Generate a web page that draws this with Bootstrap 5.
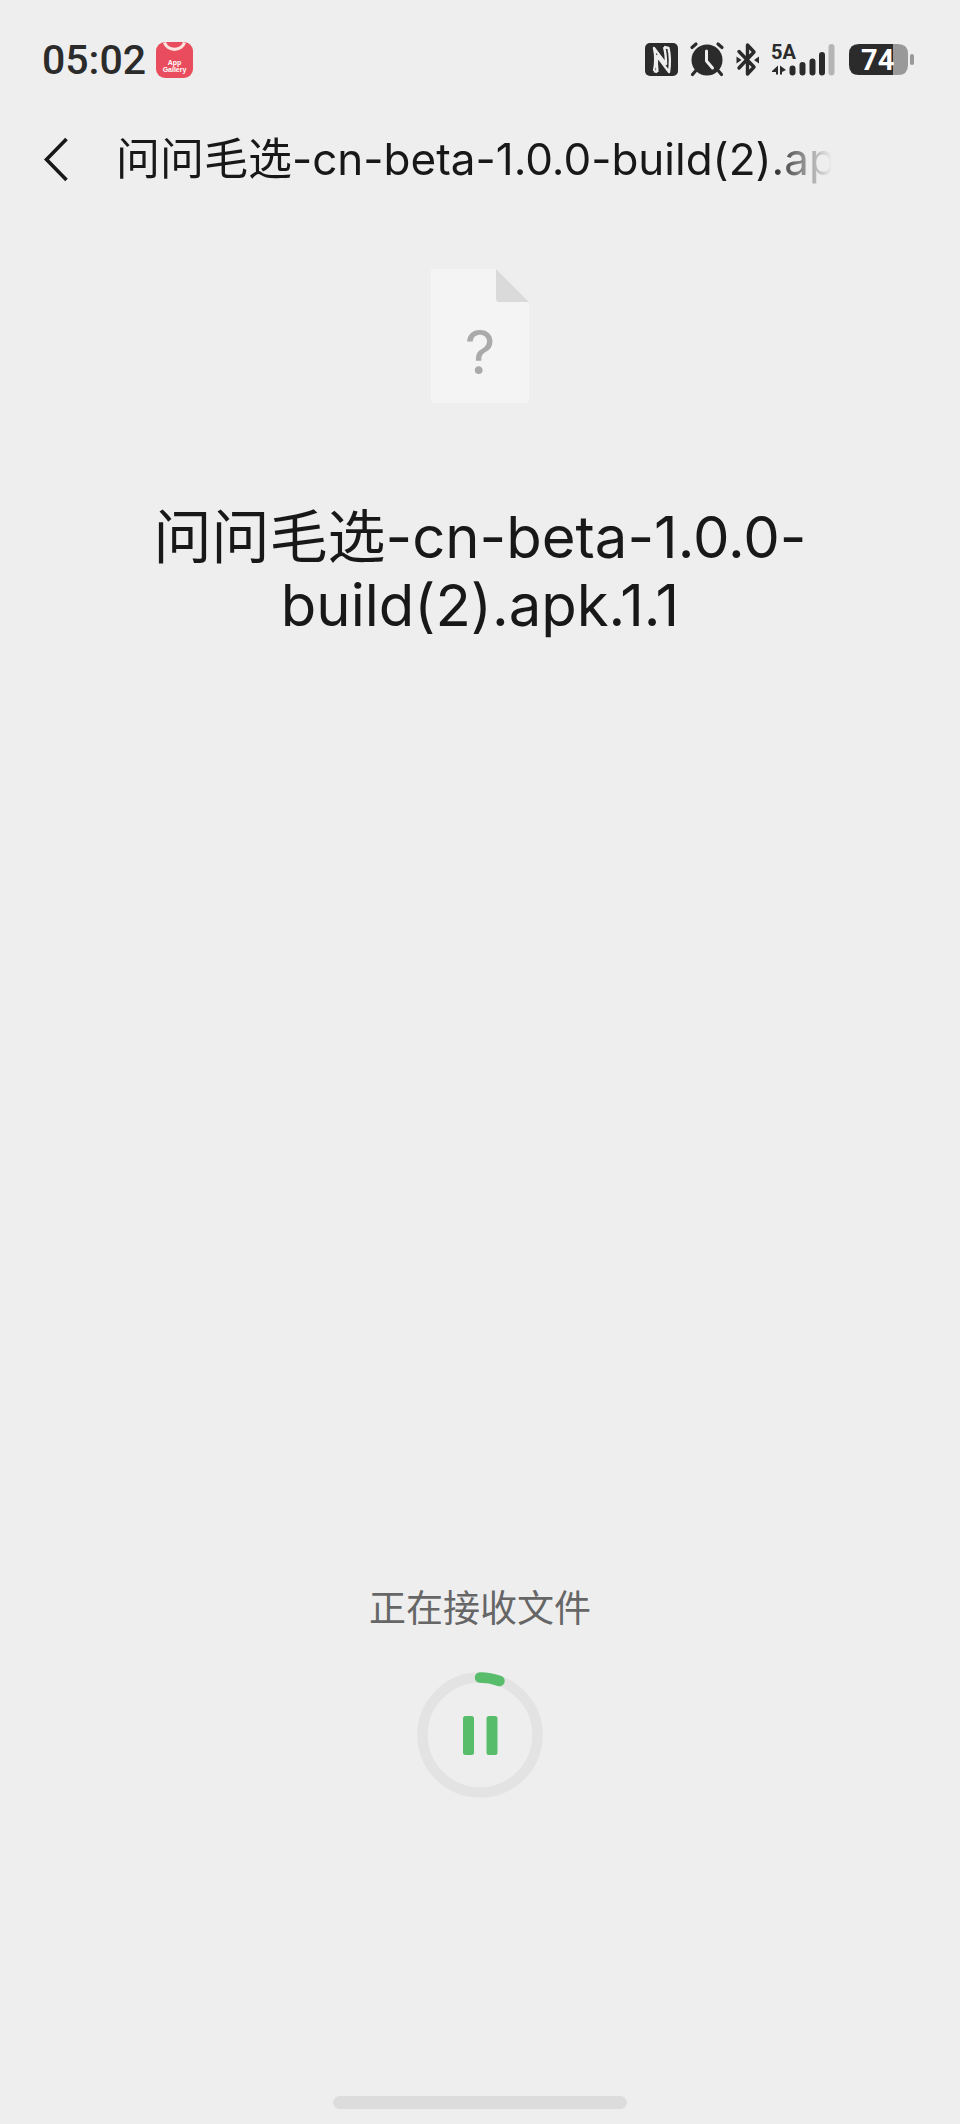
<!DOCTYPE html>
<html lang="zh-CN">
<head>
<meta charset="utf-8">
<meta name="viewport" content="width=device-width, initial-scale=1">
<title>正在接收文件</title>
<link href="https://cdn.jsdelivr.net/npm/bootstrap@5.3.0/dist/css/bootstrap.min.css" rel="stylesheet">
<style>
  body { background: #eee; color: #181818; font-family: Inter, "Noto Sans CJK SC", sans-serif; }
  svg { display: block; flex: none; overflow: visible; }
  .status-bar { padding: 37px 46px 0 42px; color: #2b2b2b; }
  .clock { font: 500 41px/46px Roboto, sans-serif; }
  .status-icons { gap: 10px; }
  .title-bar { height: 64px; margin-top: 44px; padding: 0 128px 0 40px; gap: 48px; }
  .back-btn { width: 28px; height: 48px; color: inherit; }
  .file-name { font-size: 44px; line-height: 64px; font-weight: 400;
    -webkit-mask-image: linear-gradient(to right, #000 calc(100% - 64px), transparent);
    mask-image: linear-gradient(to right, #000 calc(100% - 64px), transparent); }
  .preview { padding: 78px 120px 0; gap: 100px; }
  .full-name { font-size: 58px; line-height: 68px; font-weight: 400; }
  .receive { gap: 41px; margin-bottom: 298px; }
  .receive-label { font-size: 37px; line-height: 44px; color: #666; }
  .home-bar { width: 294px; height: 13px; margin-bottom: 15px; background: #dcdcdc; }
</style>
</head>
<body>
<div class="d-flex flex-column min-vh-100">
  <header>
    <div class="status-bar d-flex align-items-center justify-content-between">
      <div class="d-flex align-items-center gap-2">
        <span class="clock">05:02</span>
        <svg width="40" height="38" viewBox="0 0 40 38" role="img" aria-label="App Gallery">
          <rect x="2" y="1" width="37" height="36" rx="9" fill="#e94d5d"/>
          <path d="M10.500 1.500a10.500 9.800 0 0 0 20 0" fill="none" stroke="#fde4df" stroke-width="3.200"/>
          <text x="20.500" y="23.500" text-anchor="middle" font-family="Liberation Sans, sans-serif" font-weight="700" font-size="7" fill="#fff">App</text>
          <text x="20.500" y="31" text-anchor="middle" font-family="Liberation Sans, sans-serif" font-weight="700" font-size="7" fill="#fff">Gallery</text>
        </svg>
      </div>
      <div class="status-icons d-flex align-items-center">
        <svg width="35" height="36" viewBox="0 0 35 36" role="img" aria-label="NFC">
          <rect x="1" y="1" width="33" height="33" rx="5" fill="#2b2b2b"/>
          <path d="M10 29Q12.500 17 10 6L22 22Q22 12 20 5M13.500 30Q12.500 22 13 14L25 30Q27 17 24.500 6L20 5M10 29L13.500 30" fill="none" stroke="#eee" stroke-width="2.400" stroke-linejoin="round"/>
        </svg>
        <svg width="36" height="36" viewBox="0 0 36 36" role="img" aria-label="闹钟">
          <circle cx="18" cy="18" r="15.500" fill="#2b2b2b"/>
          <path d="M3 5.500l4-3.500M33 5.500l-4-3.500M6.500 29l-3 3.500M29.500 29l3 3.500" stroke="#2b2b2b" stroke-width="3.200" stroke-linecap="round"/>
          <path d="M17.500 9v10l6 7" fill="none" stroke="#eee" stroke-width="3" stroke-linecap="round" stroke-linejoin="round"/>
        </svg>
        <svg width="25" height="36" viewBox="0 0 25 36" role="img" aria-label="蓝牙">
          <path d="M4 9.500L19 25L12.500 32V3L19 10L4 26" fill="none" stroke="#2b2b2b" stroke-width="3.400" stroke-linecap="round" stroke-linejoin="round"/>
          <path d="M1.500 14.500l5 3.500l-5 3.500zM24 14.500l-5 3.500l5 3.500z" fill="#2b2b2b"/>
        </svg>
        <svg width="66" height="36" viewBox="0 0 66 36" role="img" aria-label="5A 信号">
          <text x="1" y="17" font-family="Roboto, sans-serif" font-weight="700" font-size="20" fill="#2b2b2b">5A</text>
          <path d="M2 29l6-5.500v9h-2V30H2zM16 28l-6-4.500v9h2V30z" fill="#2b2b2b"/>
          <path d="M22.500 26.500v4M32.500 23v7.500M42.500 19.500v11M52 13v17.500" stroke="#2b2b2b" stroke-width="6" stroke-linecap="round"/>
          <path d="M61.500 5v25.500" stroke="#b5b5b5" stroke-width="6" stroke-linecap="round"/>
        </svg>
        <svg width="68" height="36" viewBox="0 0 68 36" role="img" aria-label="电量 74">
          <path d="M47 2h5q10 0 10 10v11q0 10-10 10h-5z" fill="#999"/>
          <path d="M47 2H13Q3 2 3 12v11q0 10 10 10h34z" fill="#2b2b2b"/>
          <rect x="64" y="12" width="4" height="11" rx="2" fill="#999"/>
          <text x="15" y="27.500" font-family="Roboto, sans-serif" font-weight="700" font-size="29" fill="#fff">74</text>
        </svg>
      </div>
    </div>
    <nav class="title-bar d-flex align-items-center">
      <button type="button" class="back-btn btn p-0 border-0 flex-shrink-0" aria-label="返回">
        <svg width="28" height="48" viewBox="0 0 28 48"><path d="M26.500 4L6.500 24.500L26.500 45" fill="none" stroke="#181818" stroke-width="3.600"/></svg>
      </button>
      <h1 class="file-name flex-grow-1 overflow-hidden text-nowrap mb-0">问问毛选-cn-beta-1.0.0-build(2).apk.1.1</h1>
    </nav>
  </header>

  <main class="d-flex flex-column flex-grow-1">
    <section class="preview d-flex flex-column align-items-center text-center">
      <svg width="100" height="134" viewBox="0 0 100 134" role="img" aria-label="未知文件">
        <path d="M2 0H66L99 33V131q0 3-3 3H4q-3 0-3-3V1z" fill="#f4f4f4"/>
        <path d="M66 0L99 33H69q-3 0-3-3z" fill="#dadada"/>
        <text x="50" y="105" text-anchor="middle" font-family="Inter, sans-serif" font-weight="400" font-size="60" fill="#aaa">?</text>
      </svg>
      <h2 class="full-name mb-0">问问毛选-cn-beta-1.0.0-build(2).apk.1.1</h2>
    </section>
    <section class="receive mt-auto d-flex flex-column align-items-center">
      <p class="receive-label mb-0">正在接收文件</p>
      <button type="button" class="btn p-0 border-0 rounded-circle" aria-label="暂停">
        <svg width="126" height="126" viewBox="0 0 126 126">
          <circle cx="63" cy="63" r="57.500" fill="none" stroke="#e3e3e3" stroke-width="10.500"/>
          <path d="M63 5.500A57.500 57.500 0 0 1 82.500 9" fill="none" stroke="#57bd6a" stroke-width="10.500" stroke-linecap="round"/>
          <rect x="46" y="44" width="11" height="39" rx="2.500" fill="#57bd6a"/>
          <rect x="69.500" y="44" width="11" height="39" rx="2.500" fill="#57bd6a"/>
        </svg>
      </button>
    </section>
  </main>
  <footer class="d-flex justify-content-center"><div class="home-bar rounded-pill"></div></footer>
</div>
<script src="https://cdn.jsdelivr.net/npm/bootstrap@5.3.0/dist/js/bootstrap.bundle.min.js"></script>
</body>
</html>
